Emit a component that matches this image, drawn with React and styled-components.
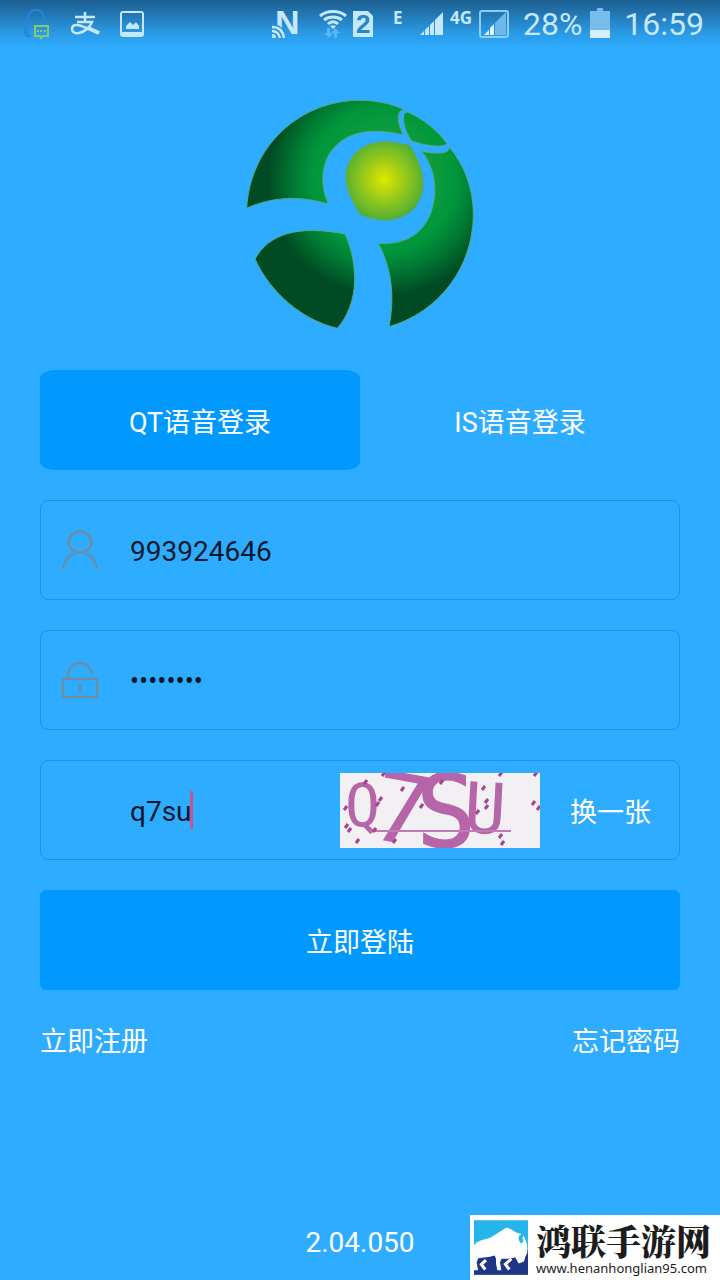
import React from 'react';
import styled, { createGlobalStyle } from 'styled-components';

const GlobalStyle = createGlobalStyle`
  * {
    box-sizing: border-box;
  }
  body {
    margin: 0;
    background-color: #2eacff;
    font-family: Roboto, 'Noto Sans CJK SC', sans-serif;
  }
  button,
  input {
    font: inherit;
  }
`;

const Page = styled.div`
  position: relative;
  display: flex;
  flex-direction: column;
  min-height: 100vh;
  color: #fff;
  font-size: 27px;
`;

const StatusBar = styled.header`
  display: flex;
  justify-content: space-between;
  align-items: center;
  height: 48px;
  padding: 0 16px 0 22px;
  background: linear-gradient(#1c6091 0, #2273ad 12px, #2a98e2 32px, #2eacff);
  color: #c4e8ff;
`;

const StatusGroup = styled.div`
  display: flex;
  align-items: center;
`;

const StatusIcon = styled.svg`
  display: block;
  flex: none;
  height: 48px;
  margin-left: ${props => props.$gap || 0}px;
  overflow: visible;
`;

const StatusText = styled.span`
  margin-left: ${props => props.$gap || 0}px;
  font-size: 32px;
  line-height: 48px;
`;

const Content = styled.main`
  display: flex;
  flex-direction: column;
  flex: 1;
  padding: 42px 40px 19px;
`;

const Logo = styled.svg`
  display: block;
  width: 250px;
  height: 250px;
  margin: 0 auto 30px;
`;

const Tabs = styled.div`
  display: flex;
  margin-bottom: 30px;
`;

const Tab = styled.button`
  flex: 1;
  height: 100px;
  padding: 0;
  border: 0;
  border-radius: 16px / 8px;
  background-color: ${props => (props.$active ? '#0099ff' : 'transparent')};
  color: #fff;
  cursor: pointer;
`;

const Form = styled.form`
  display: flex;
  flex-direction: column;
  gap: 30px;
`;

const Field = styled.div`
  display: flex;
  align-items: center;
  height: 100px;
  padding-right: 28px;
  border: 1px solid #1296f2;
  border-radius: 8px;
`;

const FieldIcon = styled.label`
  flex: none;
  width: 89px;
  padding-left: 19px;

  svg {
    display: block;
  }
`;

const Input = styled.input`
  flex: 1;
  min-width: 0;
  height: 60px;
  padding: 2px 0 0;
  border: 0;
  outline: 0;
  background: none;
  color: #06182c;
  font-size: ${props => (props.type === 'password' ? 27 : 28)}px;
`;

const CodeEntry = styled.div`
  display: flex;
  align-items: center;
  flex: 1;
  min-width: 0;
`;

const CodeInput = styled(Input)`
  flex: none;
  field-sizing: content;
`;

const Caret = styled.span`
  width: 3px;
  height: 38px;
  margin-left: -2px;
  background-color: #c75592;
`;

const Captcha = styled.svg`
  display: block;
  flex: none;
  width: 200px;
  height: 75px;
  margin-right: 30px;
  background-color: #f2f0f3;
`;

const RefreshButton = styled.button`
  flex: none;
  padding: 0;
  border: 0;
  background: none;
  color: #fff;
  cursor: pointer;
`;

const SubmitButton = styled.button`
  height: 100px;
  border: 0;
  border-radius: 6px;
  background-color: #0099ff;
  color: #fff;
  cursor: pointer;
`;

const Links = styled.nav`
  display: flex;
  justify-content: space-between;
  margin-top: 32px;
  line-height: 40px;

  a {
    color: #fff;
    text-decoration: none;
  }
`;

const Version = styled.footer`
  margin-top: auto;
  text-align: center;
  font-size: 28px;
  line-height: 36px;
`;

const SiteBadge = styled.a`
  position: absolute;
  right: 0;
  bottom: 0;
  display: flex;
  gap: 8px;
  width: 250px;
  height: 65px;
  padding: 5px 4px;
  background-color: #fff;
  color: #1c1c1c;
  text-decoration: none;

  svg {
    display: block;
    flex: none;
  }
`;

const SiteName = styled.strong`
  display: block;
  font-family: 'Noto Serif CJK SC', 'Noto Sans CJK SC', serif;
  font-size: 35px;
  font-weight: 900;
  line-height: 40px;
`;

const SiteUrl = styled.span`
  display: block;
  font-family: 'Noto Sans', sans-serif;
  font-size: 13px;
  line-height: 16px;
`;

const SignalBars = () => (
  <path d="M0 35l4-4v4zM5 30l4-4v9H5zM10 25l4-4v14h-4zM15 20l4-4v19h-4zM19 16l4-4v23h-4z" />
);

const StatusIcons = () => (
  <StatusBar>
    <StatusGroup>
      <StatusIcon width="28" viewBox="0 0 28 48">
        <path
          d="M9 36H5l-1-2 2-3-3 2c-1-4 1-7 3-10-1-8 2-13 8-13s9 5 8 12"
          fill="none"
          stroke="#2385dc"
          strokeWidth="2"
        />
        <path
          d="M13 26h13v10h-5l-2 2-1-2h-5z"
          fill="none"
          stroke="#86c86c"
          strokeWidth="2"
        />
        <path d="M15 30h2v2h-2zM18 30h2v2h-2zM22 30h2v2h-2z" fill="#86c86c" />
      </StatusIcon>
      <StatusIcon $gap={21} width="28" viewBox="0 0 28 48" fill="none" stroke="currentColor">
        <path d="M4 17h20M14 12v10M6 22h15c-2 5-7 10-13 11-4 1-7-1-7-4 0-6 8-4 12-2l15 6" strokeWidth="2.5" />
        <path d="M17 28l11 5" strokeWidth="4" />
      </StatusIcon>
      <StatusIcon $gap={21} width="24" viewBox="0 0 24 48">
        <rect x="1" y="12" width="22" height="24" rx="2" fill="none" stroke="currentColor" strokeWidth="2" />
        <path d="M1 32h22v4H1zM6 29v-3l4-4 3 3 3-3 3 4v3z" fill="currentColor" />
      </StatusIcon>
    </StatusGroup>
    <StatusGroup>
      <StatusIcon width="26" viewBox="0 0 26 48" fill="currentColor">
        <text x="3" y="34" fontFamily="Liberation Sans" fontWeight="700" fontSize="34">
          N
        </text>
        <path d="M0 24c8 0 13 5 14 14H0z" fill="#2b91d7" />
        <path d="M0 27c7 0 11 4 12 11M0 31c5 0 7 3 8 7" fill="none" stroke="currentColor" strokeWidth="2.5" />
        <path d="M0 34c3 0 4 1 4 4H0z" />
      </StatusIcon>
      <StatusIcon $gap={21} width="28" viewBox="0 0 28 48">
        <path
          d="M1 16c7-6 19-6 26 0M5 20c5-4 13-4 18 0M9 24c3-3 7-3 10 0"
          fill="none"
          stroke="currentColor"
          strokeWidth="3"
        />
        <path d="M11 26c2-1 4-1 6 0l-3 3z" fill="currentColor" />
        <path d="M8 28h3v5h3l-4 5-5-5h3zM18 38h-3v-5h-3l4-5 5 5h-3z" fill="#58b7f5" />
      </StatusIcon>
      <StatusIcon $gap={5} width="22" viewBox="0 0 22 48">
        <path d="M1 11h15l5 5v21H1z" fill="currentColor" />
        <text x="4" y="33" fontFamily="Liberation Sans" fontWeight="700" fontSize="26" fill="#2b86c6">
          2
        </text>
      </StatusIcon>
      <StatusIcon $gap={19} width="10" viewBox="0 0 10 48" fill="currentColor">
        <text x="0" y="24" fontFamily="Open Sans" fontWeight="700" fontSize="17">
          E
        </text>
      </StatusIcon>
      <StatusIcon $gap={17} width="23" viewBox="0 0 23 48" fill="currentColor">
        <SignalBars />
      </StatusIcon>
      <StatusIcon $gap={7} width="22" viewBox="0 0 22 48" fill="currentColor">
        <text x="0" y="24" fontFamily="Open Sans" fontWeight="700" fontSize="17">
          4G
        </text>
      </StatusIcon>
      <StatusIcon $gap={7} width="30" viewBox="0 0 30 48">
        <rect x="1" y="11" width="28" height="26" rx="2" fill="none" stroke="#8ecdf7" strokeWidth="2" />
        <path d="M16 23l11-11v23H16z" fill="#6ab8ec" />
        <path d="M5 35l5-5v5zM11 28l4-4v11h-4z" fill="#e2f5ff" />
      </StatusIcon>
      <StatusText $gap={14}>28%</StatusText>
      <StatusIcon $gap={8} width="20" viewBox="0 0 20 48">
        <path d="M7 8h6v3h7v19H0V11h7z" fill="#76bdec" />
        <path d="M0 30h20v8H0z" fill="#d5f0ff" />
      </StatusIcon>
      <StatusText $gap={14}>16:59</StatusText>
    </StatusGroup>
  </StatusBar>
);

const BrandLogo = () => (
  <Logo viewBox="-2 0 750 750" role="img" aria-label="logo">
    <defs>
      <radialGradient id="leaf" gradientUnits="userSpaceOnUse" cx="445" cy="268" r="350">
        <stop offset="0" stopColor="#dfe600" />
        <stop offset="0.34" stopColor="#58b030" />
        <stop offset="0.42" stopColor="#0d9c3b" />
        <stop offset="0.62" stopColor="#00963c" />
        <stop offset="0.78" stopColor="#007a33" />
        <stop offset="1" stopColor="#004b23" />
      </radialGradient>
    </defs>
    <g fill="url(#leaf)" stroke="#55a98c" strokeWidth="3">
      <path d="M33 355C44 165 195 31 373 31c49 0 96 10 140 31-13-7-24 0-25 18-1 18 7 38 15 55-67-16-133-19-188 20-55 40-68 118-37 187-78-24-167-24-245 13z" />
      <path d="M516 66c45 20 89 54 117 94-5 13-52 11-105-7-20-29-32-68-20-85z" />
      <path d="M640 170c48 57 73 130 73 203 0 158-103 294-253 337 18-91 8-174-32-250 73 6 131-24 157-90 23-66 14-136-28-187 41 10 88 10 83-13z" />
      <path d="M375 375c-25-40-47-75-45-120 5-70 70-105 130-100 25 2 45 6 62 11 22 33 41 71 41 119-3 61-48 105-113 106-30 0-55-9-75-16z" />
      <path d="M58 507c42-77 132-102 270-75 22 48 30 98 29 143-2 55-21 105-52 140C200 690 105 610 58 507z" />
    </g>
  </Logo>
);

const UserIcon = () => (
  <svg width="40" height="40" viewBox="0 0 40 40" fill="none" stroke="#6a8ea8" strokeWidth="2.5">
    <ellipse cx="20" cy="12" rx="11.5" ry="10.5" />
    <path d="M3 39c1-8 6-14 12-16M25 23c6 2 11 8 12 16" />
  </svg>
);

const LockIcon = () => (
  <svg width="40" height="40" viewBox="0 0 40 40" fill="none" stroke="#6a8ea8" strokeWidth="2.5">
    <rect x="3" y="19" width="34" height="18" rx="1" />
    <path d="M8 19v-3C8 8 13 3 20 3c6 0 11 4 12 11M20 26v6M18 26h4" />
  </svg>
);

const specks = [
  [43, 1], [160, 1], [195, 1], [62, 16], [25, 9], [40, 26], [37, 31], [5, 35],
  [81, 33], [143, 15], [146, 28], [146, 34], [137, 39], [193, 30], [198, 35],
  [6, 53], [9, 57], [17, 68], [54, 68], [160, 63], [162, 70], [34, 57], [101, 9],
];

const CaptchaPicture = () => (
  <Captcha viewBox="0 0 200 75" role="img" aria-label="验证码">
    <g fill="#b565a8" fontFamily="DejaVu Sans Mono">
      <text x="5" y="53" fontSize="58">
        Q
      </text>
      <text x="33" y="70" fontSize="96" transform="rotate(10 62 36)">
        7
      </text>
      <text x="76" y="74" fontSize="100" stroke="#b565a8" strokeWidth="1">
        S
      </text>
      <text x="124" y="60" fontSize="70" transform="rotate(3 144 35)">
        U
      </text>
    </g>
    <path d="M30 58h141" stroke="#c07ab8" strokeWidth="2" />
    {specks.map(([x, y]) => (
      <path key={`${x}-${y}`} d={`M${x - 1} ${y + 2}l3-4`} stroke="#a8408f" strokeWidth="3" />
    ))}
  </Captcha>
);

const BisonLogo = () => (
  <svg width="54" height="55" viewBox="0 0 162 164">
    <path d="M0 0h162v164H0z" fill="#25b5ea" />
    <path d="M0 104l162-14v74H0z" fill="#1f3587" />
    <path
      d="M0 76c8-12 16-14 30-18 24-5 32-14 68-36 14 4 24 14 38 18l8 2c6 4 6 8 10 16 6 10 6 22 6 40l-6 12-4 14-16 6-10-18-22 4H66l-4-10-14 4-48 6z"
      fill="#fff"
    />
    <path d="M0 106h16l-8 20 4 24H0zM66 104h22l-10 22 4 24H70l-4-20z" fill="#fff" />
    <path d="M36 120l-14 13 12 15M112 116l-18 16 12 16" fill="none" stroke="#fff" strokeWidth="9" />
    <path d="M146 34c4 8 2 14-1 20 5 4 4 12-3 16-8-6-10-16-6-24 6-2 9-6 10-12z" fill="#25b5ea" />
  </svg>
);

const App = () => {
  const [mode, setMode] = React.useState('qt');
  const [account, setAccount] = React.useState('993924646');
  const [password, setPassword] = React.useState('password');
  const [code, setCode] = React.useState('q7su');

  return (
    <Page>
      <GlobalStyle />
      <StatusIcons />
      <Content>
        <BrandLogo />
        <Tabs>
          <Tab type="button" $active={mode === 'qt'} onClick={() => setMode('qt')}>
            QT语音登录
          </Tab>
          <Tab type="button" $active={mode === 'is'} onClick={() => setMode('is')}>
            IS语音登录
          </Tab>
        </Tabs>
        <Form onSubmit={e => e.preventDefault()}>
          <Field>
            <FieldIcon htmlFor="account" aria-label="账号">
              <UserIcon />
            </FieldIcon>
            <Input id="account" value={account} onChange={e => setAccount(e.target.value)} />
          </Field>
          <Field>
            <FieldIcon htmlFor="password" aria-label="密码">
              <LockIcon />
            </FieldIcon>
            <Input
              id="password"
              type="password"
              value={password}
              onChange={e => setPassword(e.target.value)}
            />
          </Field>
          <Field>
            <FieldIcon htmlFor="code" aria-label="验证码" />
            <CodeEntry>
              <CodeInput id="code" value={code} onChange={e => setCode(e.target.value)} />
              <Caret />
            </CodeEntry>
            <CaptchaPicture />
            <RefreshButton type="button">换一张</RefreshButton>
          </Field>
          <SubmitButton type="submit">立即登陆</SubmitButton>
        </Form>
        <Links>
          <a href="#register">立即注册</a>
          <a href="#forgot">忘记密码</a>
        </Links>
        <Version>2.04.050</Version>
      </Content>
      <SiteBadge href="#site">
        <BisonLogo />
        <div>
          <SiteName>鸿联手游网</SiteName>
          <SiteUrl>www.henanhonglian95.com</SiteUrl>
        </div>
      </SiteBadge>
    </Page>
  );
};

export default App;
